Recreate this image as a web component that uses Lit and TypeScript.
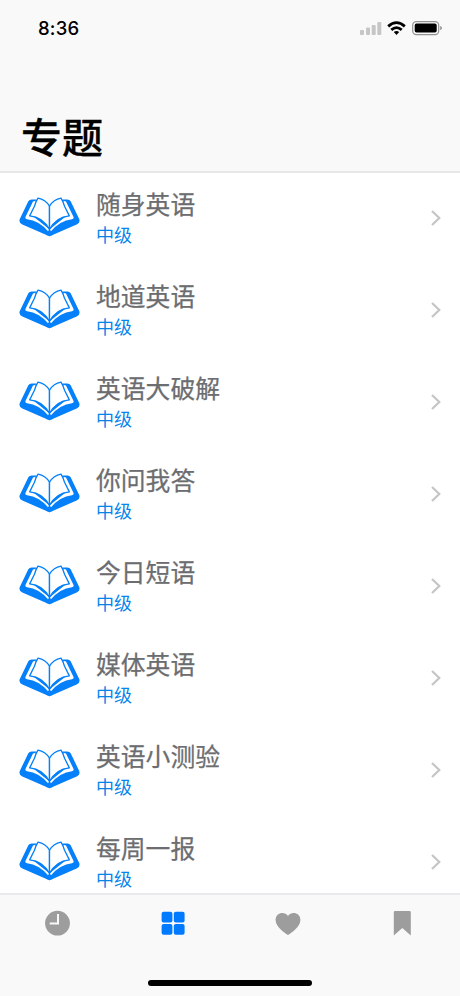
import { LitElement, html, css, svg } from "lit";
import { customElement } from "lit/decorators.js";

const topics = ["随身英语", "地道英语", "英语大破解", "你问我答", "今日短语", "媒体英语", "英语小测验", "每周一报"];

const bookHalf = svg`
  <path fill="#0580fa" d="M120.5 155 Q115 155 107 150 L38 120 Q27 115 30 104 L56 50 Q59 45 66 45 L80 45 L120.5 100Z"/>
  <path fill="#fff" d="M78 49 L70 51 L47 98 Q46 103 52 104 Q88 108 115 140 L119 134 L70 95Z"/>
  <path fill="#fff" stroke="#0580fa" stroke-width="4" stroke-linejoin="round" d="M119.5 65 Q107 45 85 41 Q79 50 74 66 L60 94 Q99 97 119.5 135Z"/>`;

@customElement("app-root")
export class AppRoot extends LitElement {
  static styles = css`
    :host {
      display: flex;
      flex-direction: column;
      width: 460px;
      height: 996px;
      overflow: hidden;
      background: #fff;
      font-family: Inter, "Noto Sans CJK SC", sans-serif;
    }
    * { box-sizing: border-box; }
    svg { display: block; }
    header {
      flex: none;
      height: 173px;
      background: #f9f9f9;
      border-bottom: 2px solid #e7e7e8;
      display: flex;
      flex-direction: column;
      justify-content: space-between;
    }
    .status {
      display: flex;
      justify-content: space-between;
      padding: 17px 17px 0 38px;
    }
    .time {
      font-size: 18.5px;
      line-height: 23px;
      font-weight: 550;
      letter-spacing: 0.2px;
    }
    .signals { margin-top: 3px; }
    h1 {
      margin: 0;
      padding: 0 0 6px 21px;
      font: 500 41px/60px "Noto Sans CJK SC", sans-serif;
      -webkit-text-stroke: 0.3px #000;
      color: #000;
    }
    main {
      flex: 1;
      min-height: 0;
      overflow: hidden;
    }
    .row {
      height: 92px;
      display: flex;
      align-items: center;
      padding: 0 18px 2px 19px;
    }
    .book { margin-bottom: 3px; }
    .labels {
      flex: 1;
      margin: 0 0 5px 16px;
    }
    .name {
      font: 400 24.8px/36px "Noto Sans CJK SC", sans-serif;
      -webkit-text-stroke: 0.25px #6c6d70;
      color: #6c6d70;
    }
    .level {
      font: 400 18px/26px "Noto Sans CJK SC", sans-serif;
      color: #0784ec;
    }
    nav {
      flex: none;
      height: 103px;
      border-top: 2px solid #e9e9eb;
      background: #f9f9f9;
      display: flex;
      flex-direction: column;
      justify-content: space-between;
      align-items: center;
    }
    .tabs {
      display: grid;
      grid-template-columns: repeat(4, 1fr);
      width: 100%;
      padding-top: 14px;
      justify-items: center;
    }
    .home {
      width: 164px;
      height: 6px;
      border-radius: 3px;
      background: #000;
      margin-bottom: 10px;
    }
  `;

  render() {
    return html`
      <header>
        <div class="status">
          <span class="time">8:36</span>
          <svg class="signals" width="83" height="17" viewBox="360 20 83 17">
            <g fill="#c6c6c6">
              <rect x="360" y="30" width="4" height="5" rx="1"/>
              <rect x="366" y="27.5" width="4" height="7.5" rx="1"/>
              <rect x="371.7" y="25" width="4" height="10" rx="1"/>
              <rect x="377.3" y="22" width="4" height="13" rx="1"/>
            </g>
            <g fill="none" stroke="#000" stroke-width="2.8">
              <path d="M388.2 26.4 Q396.5 18.9 404.8 26.4"/>
              <path d="M391.3 29.9 Q396.5 25.4 401.7 29.9"/>
            </g>
            <path d="M393.8 31.9 Q396.5 29.9 399.2 31.9 L396.5 35Z"/>
            <rect x="412.7" y="21.6" width="26" height="13" rx="3.6" fill="none" stroke="#929292" stroke-width="1.2"/>
            <rect x="414.7" y="23.6" width="22" height="9" rx="1.8"/>
            <path fill="#929292" d="M440.2 26 Q442 26.7 442 28.1 Q442 29.5 440.2 30.2Z"/>
          </svg>
        </div>
        <h1>专题</h1>
      </header>
      <main>
        ${topics.map((name) => html`
          <div class="row">
            <svg class="book" width="61" height="41" viewBox="28 34.5 183 123">
              ${bookHalf}
              <g transform="matrix(-1 0 0 1 239 0)">${bookHalf}</g>
            </svg>
            <div class="labels">
              <div class="name">${name}</div>
              <div class="level">中级</div>
            </div>
            <svg width="12" height="18" viewBox="0 0 12 18">
              <path d="M2 2 L9.3 9 L2 16" fill="none" stroke="#c5c5c8" stroke-width="2.2"/>
            </svg>
          </div>`)}
      </main>
      <nav>
        <div class="tabs">
          <svg width="28" height="28" viewBox="0 0 28 28">
            <circle cx="13.5" cy="14.2" r="12.4" fill="#9d9d9d"/>
            <path d="M14 5 V14.4 H5.7" fill="none" stroke="#f9f9f9" stroke-width="2"/>
          </svg>
          <svg width="28" height="28" viewBox="0 0 28 28" fill="#007aff">
            <rect x="2.6" y="2.8" width="10.8" height="10.8" rx="2"/>
            <rect x="14.8" y="2.8" width="10.8" height="10.8" rx="2"/>
            <rect x="2.6" y="15" width="10.8" height="10.8" rx="2"/>
            <rect x="14.8" y="15" width="10.8" height="10.8" rx="2"/>
          </svg>
          <svg width="28" height="28" viewBox="0 0 28 28">
            <path fill="#9d9d9d" d="M14 26 C10 23.6 1.6 17.5 1.6 11 C1.6 3.8 10.2 1.7 14 6.9 C17.8 1.7 26.4 3.8 26.4 11 C26.4 17.5 18 23.6 14 26Z"/>
          </svg>
          <svg width="28" height="28" viewBox="0 0 28 28">
            <path fill="#9d9d9d" d="M4.8 26.6 V3.2 Q4.8 1.9 6.1 1.9 H20.5 Q21.8 1.9 21.8 3.2 V26.6 L13.3 19Z"/>
          </svg>
        </div>
        <div class="home"></div>
      </nav>`;
  }
}
